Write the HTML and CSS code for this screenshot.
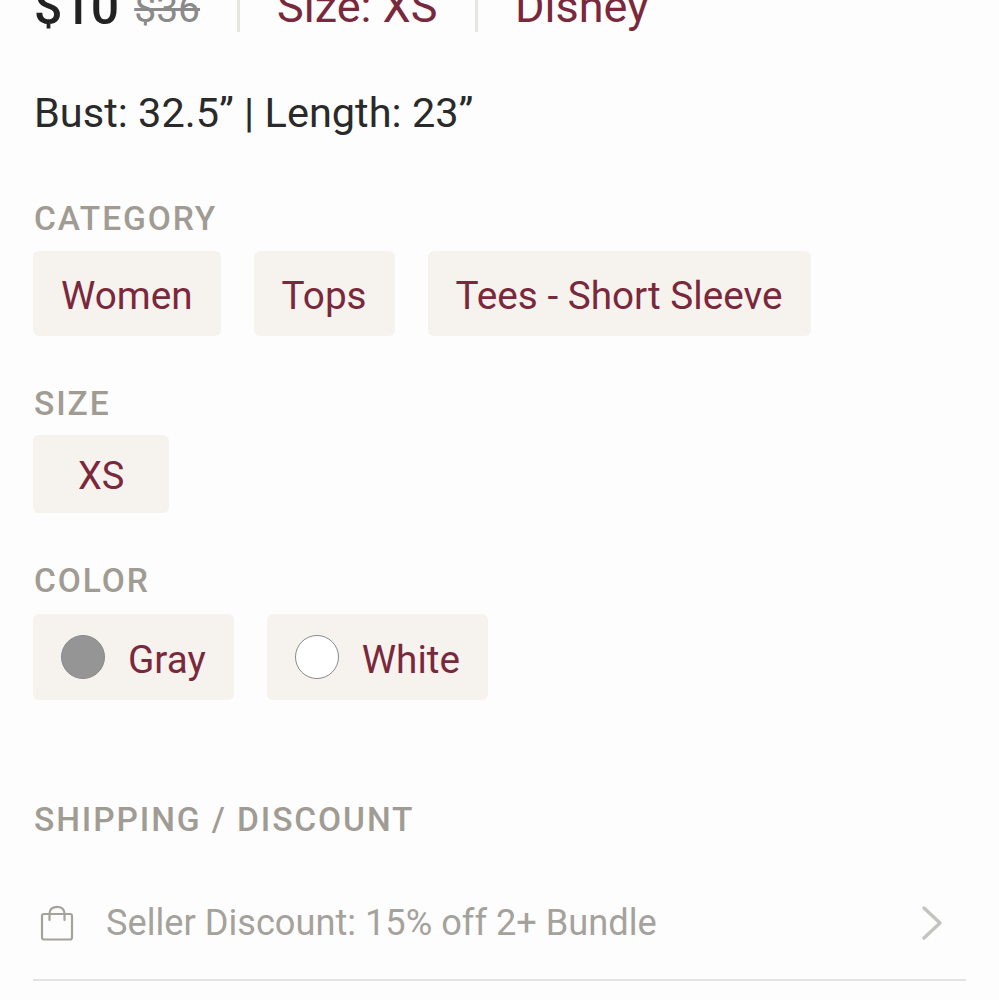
FILE: index.html
```html
<!DOCTYPE html>
<html lang="en">
<head>
<meta charset="utf-8">
<title>Listing details</title>
<link rel="stylesheet" href="styles.css">
</head>
<body>
<main class="page">
  <div class="summary">
    <div class="prices"><span class="price">$10</span><s class="was">$36</s></div>
    <div class="fact fact-size">Size: XS</div>
    <div class="fact fact-brand">Disney</div>
  </div>
  <p class="desc">Bust: 32.5” | Length: 23”</p>

  <h2 class="label label-category">CATEGORY</h2>
  <div class="chips chips-category">
    <span class="chip">Women</span>
    <span class="chip">Tops</span>
    <span class="chip">Tees - Short Sleeve</span>
  </div>

  <h2 class="label label-size">SIZE</h2>
  <div class="chips">
    <span class="chip chip-size">XS</span>
  </div>

  <h2 class="label label-color">COLOR</h2>
  <div class="chips chips-color">
    <span class="chip chip-color"><i class="dot dot-gray"></i><span class="chip-text">Gray</span></span>
    <span class="chip chip-color"><i class="dot dot-white"></i><span class="chip-text">White</span></span>
  </div>

  <h2 class="label label-ship">SHIPPING / DISCOUNT</h2>
  <div class="discount">
    <svg class="bag" width="34" height="36" viewBox="0 0 34 36" fill="none" stroke="#a5a29c" stroke-width="2.2" stroke-linejoin="round" stroke-linecap="round"><rect x="2" y="9" width="30" height="25.500" rx="2"/><path d="M9.500 15V8.500C9.500 4.500 12.500 1.800 17 1.800S24.500 4.500 24.500 8.500V15"/></svg>
    <span class="discount-text">Seller Discount: 15% off 2+ Bundle</span>
    <svg class="chev" width="24" height="36" viewBox="0 0 24 36" fill="none" stroke="#c4c3c0" stroke-width="3.400" stroke-linecap="round" stroke-linejoin="round"><path d="M4 3L20 18L4 33"/></svg>
  </div>
</main>
</body>
</html>
```
FILE: styles.css
```css
html, body {
  margin: 0;
  padding: 0;
  height: 1000px;
  overflow: hidden;
  background: #fdfdfd;
}
.page {
  font-family: Roboto, "Liberation Sans", sans-serif;
  padding: 0 33px;
  margin-top: -21px;
}
.summary {
  display: flex;
  align-items: flex-start;
  height: 53px;
  color: #7a283b;
  font-size: 45px;
  line-height: 56px;
}
.prices {
  width: 203px;
  padding-left: 1px;
}
.price {
  color: #222;
  font-size: 50px;
  font-weight: 500;
}
.was {
  margin-left: 15px;
  color: #8a8a8a;
  font-size: 39px;
  vertical-align: 2px;
}
.fact {
  border-left: 3px solid #e7e5e0;
  height: 53px;
  box-sizing: border-box;
}
.fact-size { width: 238px; padding-left: 37px; }
.fact-brand { padding-left: 37px; }
.desc {
  margin: 57px 0 0 1px;
  color: #2a2a2a;
  font-size: 41.500px;
  line-height: 47px;
}
.label {
  margin: 0 0 0 1px;
  color: #a09c94;
  font-size: 33.500px;
  line-height: 36px;
  font-weight: 500;
  letter-spacing: 1.900px;
}
.label-category { margin-top: 65px; }
.label-size { margin-top: 50px; }
.label-color { margin-top: 50px; }
.label-ship { margin-top: 102px; }
.chips {
  display: flex;
  gap: 33px;
  margin-top: 13px;
}
.chips-category { margin-top: 14px; }
.chips-color { margin-top: 15px; }
.chip {
  display: flex;
  align-items: center;
  box-sizing: border-box;
  height: 85px;
  padding: 4px 28px 0;
  border-radius: 6px;
  background: #f6f3ef;
  color: #7a283b;
  font-size: 38.700px;
}
.chip-size {
  height: 78px;
  padding: 4px 45px 0;
  font-size: 38px;
}
.chip-color {
  height: 86px;
  padding-top: 0;
  gap: 23px;
}
.chip-text { padding-top: 4px; }
.dot {
  width: 44px;
  height: 44px;
  border-radius: 50%;
  box-sizing: border-box;
  border: 1px solid #8a8a8a;
}
.dot-gray { background: #959595; }
.dot-white { background: #fff; }
.discount {
  display: flex;
  align-items: center;
  margin-top: 42px;
  height: 101px;
  padding: 0 22px 14px 7px;
  box-sizing: border-box;
  border-bottom: 2px solid #e3e2df;
}
.bag { flex: none; }
.discount-text {
  flex: 1;
  margin-left: 32px;
  color: #a5a29c;
  font-size: 36.200px;
}
.chev { flex: none; }
```
